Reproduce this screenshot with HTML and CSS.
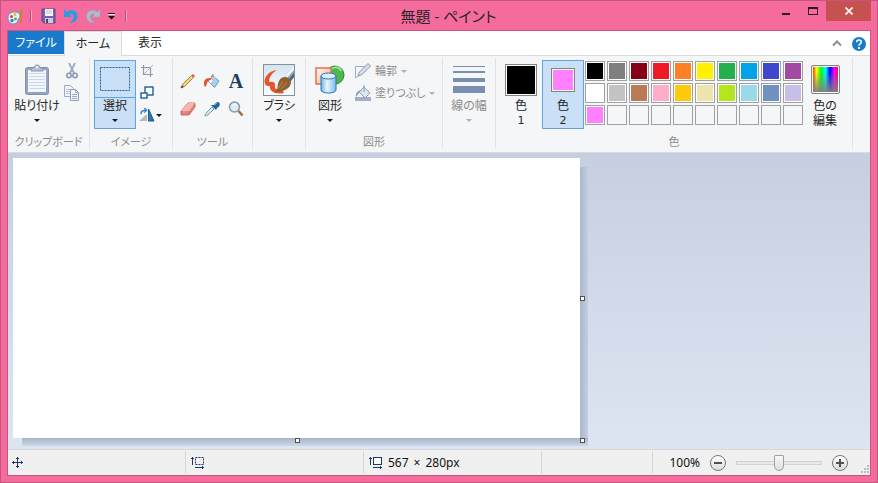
FILE: index.html
```html
<!DOCTYPE html>
<html lang="ja">
<head>
    <meta charset="UTF-8">
    <meta name="viewport" content="width=device-width, initial-scale=1.0">
    <title>無題 - ペイント</title>
    <link rel="stylesheet" href="styles.css">
</head>
<body>
    <div class="window">
        <!-- Title bar -->
        <header class="titlebar">
            <div class="quick-access">
                <svg class="app-icon" width="17" height="17" viewBox="0 0 17 17">
                    <path d="M1 10C1 6 4 4 8 4c3 0 5 1 5 4s-2 2-2 4-2 4-5 4-5-3-5-6z" fill="#e6f4fa" stroke="#4b9fc5"/>
                    <circle cx="4.500" cy="8.500" r="1.600" fill="#e8493a"/>
                    <circle cx="8" cy="6.500" r="1.500" fill="#f3b52b"/>
                    <circle cx="5" cy="12.500" r="1.700" fill="#3f78d1"/>
                    <circle cx="8.500" cy="11" r="1.400" fill="#46b04a"/>
                    <path d="M14 5v10" stroke="#e0782a" stroke-width="2"/>
                    <path d="M12 5l1-3 3-2v5z" fill="#b98a52"/>
                </svg>
                <span class="qa-line"></span>
                <button class="qa-button" aria-label="上書き保存">
                    <svg width="16" height="16" viewBox="0 0 16 16">
                        <path d="M1 1h13v14H3l-2-2z" fill="#7a62a8" stroke="#5b4687"/>
                        <path d="M4 1h8v7H4z" fill="#f4f4fa"/>
                        <path d="M5 3h6M5 5h6" stroke="#c0bfd6"/>
                        <path d="M4 10h8v5H4z" fill="#cfc9de"/>
                        <path d="M5 11h2v4H5z" fill="#4d4168"/>
                    </svg>
                </button>
                <button class="qa-button" aria-label="元に戻す">
                    <svg width="16" height="16" viewBox="0 0 16 16">
                        <path d="M1 1v8h8L6.500 6.500C9 5 10.500 6.500 10.500 9c0 2-1.500 4-4 6C12 15 14.500 12 14.500 8 14.500 3 9 .5 3.500 4z" fill="#2b9be4"/>
                    </svg>
                </button>
                <button class="qa-button" aria-label="やり直し">
                    <svg width="16" height="16" viewBox="0 0 16 16">
                        <path d="M15 1v8H7l2.500-2.500C7 5 5.500 6.500 5.500 9c0 2 1.500 4 4 6C4 15 1.500 12 1.500 8 1.500 3 7 .5 12.500 4z" fill="#aebacb" stroke="#94a2b8" stroke-width=".6"/>
                    </svg>
                </button>
                <button class="qa-button qa-more" aria-label="カスタマイズ">
                    <svg width="9" height="7" viewBox="0 0 9 7">
                        <path d="M1 0h7v1H1z" fill="#111"/>
                        <path d="M1 1h7v1H1z" fill="#fff"/>
                        <path d="M1 3h7L4.500 6.500z" fill="#111"/>
                    </svg>
                </button>
                <span class="qa-line"></span>
            </div>
            <h1 class="title">無題 - ペイント</h1>
            <div class="window-controls">
                <button class="control" aria-label="最小化"><svg width="11" height="10" viewBox="0 0 11 10"><path d="M2 7h8v2H2z" fill="#2a1a20"/></svg></button>
                <button class="control" aria-label="最大化"><svg width="10" height="8" viewBox="0 0 10 8"><path d="M0 0h10v8H0zM1 2v5h8V2z" fill="#2a1a20" fill-rule="evenodd"/></svg></button>
                <button class="control close" aria-label="閉じる"><svg width="8" height="8" viewBox="0 0 8 8"><path d="M.5.5l7 7M7.500.5l-7 7" stroke="#fff" stroke-width="1.700"/></svg></button>
            </div>
        </header>

        <main class="content">
            <nav class="tabs">
                <button class="tab file">ファイル</button>
                <button class="tab active">ホーム</button>
                <button class="tab">表示</button>
                <div class="tab-tools">
                    <button aria-label="リボンの最小化"><svg width="10" height="8" viewBox="0 0 10 8"><path d="M1 5.500l4-4 4 4" fill="none" stroke="#8c8c8c" stroke-width="2"/></svg></button>
                    <button aria-label="ヘルプ">
                        <svg width="14" height="14" viewBox="0 0 14 14">
                            <circle cx="7" cy="7" r="7" fill="#1979ca"/>
                            <path d="M4.700 5.200C4.700 2.200 9.300 2.400 9.300 5 9.300 6.800 7 6.700 7 8.800" fill="none" stroke="#fff" stroke-width="1.600"/>
                            <path d="M6 10h2v2H6z" fill="#fff"/>
                        </svg>
                    </button>
                </div>
            </nav>

            <!-- Ribbon -->
            <div class="ribbon">
                <section class="group clipboard">
                    <div class="tools">
                        <button class="big">
                            <span class="picture">
                                <svg width="26" height="32" viewBox="0 0 26 32">
                                    <rect x="1.500" y="3.500" width="23" height="27" rx="2" fill="#94a4c0" stroke="#8292b0"/>
                                    <path d="M4 6h18v22H4z" fill="#f3f7fc"/>
                                    <path d="M5 9.500h16M5 12.500h16M5 15.500h16M5 18.500h16M5 21.500h16M5 24.500h16" stroke="#cbd8e8"/>
                                    <path d="M7 7V4h3c0-4 6-4 6 0h3v3z" fill="#b6c2d5" stroke="#8493ae"/>
                                    <circle cx="13" cy="3" r="1" fill="#fff"/>
                                </svg>
                            </span>
                            <span>貼り付け</span>
                            <i class="arrow"></i>
                        </button>
                        <div class="stack">
                            <button class="small" aria-label="切り取り">
                                <svg width="16" height="16" viewBox="0 0 16 16">
                                    <path d="M5 0l5 10M11 0L6 10" stroke="#9aa8c0" stroke-width="1.800"/>
                                    <circle cx="5" cy="12.500" r="2.200" fill="none" stroke="#8a9ab6" stroke-width="1.600"/>
                                    <circle cx="11" cy="12.500" r="2.200" fill="none" stroke="#8a9ab6" stroke-width="1.600"/>
                                </svg>
                            </button>
                            <button class="small" aria-label="コピー">
                                <svg width="16" height="16" viewBox="0 0 16 16">
                                    <path d="M.5.500h6l3 3v8h-9z" fill="#f1f5fa" stroke="#9eabc2"/>
                                    <path d="M2 4.500h5M2 6.500h5M2 8.500h5" stroke="#b8c3d5"/>
                                    <path d="M6.500 4.500h5l3 3v8h-8z" fill="#f1f5fa" stroke="#8f9eb9"/>
                                    <path d="M11.500 4.500v3h3M8 9.500h5M8 11.500h5M8 13.500h5" fill="none" stroke="#9eabc2"/>
                                </svg>
                            </button>
                        </div>
                    </div>
                    <h2 class="group-name">クリップボード</h2>
                </section>

                <section class="group image">
                    <div class="tools">
                        <button class="big selected split">
                            <span class="picture">
                                <svg width="30" height="24" viewBox="0 0 30 24"><rect x=".5" y=".5" width="29" height="23" fill="none" stroke="#1f639f" stroke-dasharray="2 1"/></svg>
                            </span>
                            <span>選択</span>
                            <i class="arrow"></i>
                        </button>
                        <div class="stack">
                            <button class="small" aria-label="トリミング">
                                <svg width="14" height="14" viewBox="0 0 14 14">
                                    <path d="M3.500 1v9.500H13M1 3.500h9.500V13" fill="none" stroke="#8d9ab0" stroke-width="1.200"/>
                                    <path d="M4 10L13 1" stroke="#a9b4c6"/>
                                </svg>
                            </button>
                            <button class="small" aria-label="サイズ変更">
                                <svg width="14" height="14" viewBox="0 0 14 14">
                                    <rect x="5" y="1" width="8" height="8" fill="#fff" stroke="#1c6096" stroke-width="1.400"/>
                                    <rect x="1" y="7" width="6" height="5" fill="#fff" stroke="#1c6096" stroke-width="1.400"/>
                                </svg>
                            </button>
                            <button class="small wide" aria-label="回転">
                                <svg width="16" height="14" viewBox="0 0 16 14">
                                    <path d="M0 13h8V6z" fill="#b5b9be"/>
                                    <path d="M9.500 1v12H15z" fill="#2f76a8" stroke="#1f5f8f"/>
                                    <path d="M2 6c0-3 2-4 5-3.500M5.500 0l2 2.500L5 4.500" fill="none" stroke="#2b82d6" stroke-width="1.500"/>
                                </svg>
                                <i class="arrow"></i>
                            </button>
                        </div>
                    </div>
                    <h2 class="group-name">イメージ</h2>
                </section>

                <section class="group drawing">
                    <div class="tool-grid">
                        <button class="small" aria-label="鉛筆">
                            <svg width="16" height="16" viewBox="0 0 16 16">
                                <path d="M1 15l1.500-3.500L11.500 2.500 13.500 4.500 4.500 13.500z" fill="#f2cb62" stroke="#8e6b28" stroke-width=".8"/>
                                <path d="M11.500 2.500L13 1l2 2-1.500 1.500z" fill="#d9604f"/>
                                <path d="M1 15l1-2.500 1.500 1.500z" fill="#33302a"/>
                                <path d="M4 12l8-8" stroke="#fff0b0" stroke-width=".7"/>
                            </svg>
                        </button>
                        <button class="small" aria-label="塗りつぶし">
                            <svg width="18" height="16" viewBox="0 0 18 16">
                                <path d="M5 8l5-5 6 5-4.500 6.500z" fill="#a9d0ee" stroke="#5b87ab" stroke-width=".8"/>
                                <path d="M5.500 8l4.500-4.500L12 5l-4.500 5.500z" fill="#f2f9fd"/>
                                <path d="M10 7.500V1l-2 3" fill="none" stroke="#7c8994" stroke-width=".9"/>
                                <path d="M1.500 13.500C0 8 2 4.500 8 5c1 0 .5 2-.5 2-3 0-3.500 3-4.500 6.500z" fill="#e5532d"/>
                            </svg>
                        </button>
                        <button class="small" aria-label="テキスト"><span class="letter">A</span></button>
                        <button class="small" aria-label="消しゴム">
                            <svg width="16" height="16" viewBox="0 0 16 16">
                                <path d="M1 10l7-8h7v4l-6 8H1z" fill="#e8837c" stroke="#b25852" stroke-width=".8"/>
                                <path d="M1 10l7-8h7l-6 8z" fill="#f6b6ae"/>
                                <path d="M9 10v4" stroke="#c9675f"/>
                            </svg>
                        </button>
                        <button class="small" aria-label="色の選択">
                            <svg width="16" height="16" viewBox="0 0 16 16">
                                <path d="M1 15c0-2 1-3 7-9l2 2c-6 6-7 7-9 7z" fill="#d3e8f4" stroke="#5c7d95" stroke-width=".8"/>
                                <path d="M7 4l5 5 1-2c4-2 3-6 1-6s-2 1-4 3z" fill="#20639d"/>
                                <path d="M11 4l2-2" stroke="#6ba9d8"/>
                            </svg>
                        </button>
                        <button class="small" aria-label="拡大鏡">
                            <svg width="16" height="16" viewBox="0 0 16 16">
                                <circle cx="6.500" cy="6" r="5" fill="#dcedf8" stroke="#8c98a3" stroke-width="1.500"/>
                                <path d="M10.500 10l4 4.500" stroke="#a96a35" stroke-width="2.500"/>
                                <path d="M4 5c1-2 3-2 4-1" fill="none" stroke="#fff"/>
                            </svg>
                        </button>
                    </div>
                    <h2 class="group-name">ツール</h2>
                </section>

                <section class="group brush">
                    <div class="tools">
                        <button class="big">
                            <span class="picture">
                                <svg width="32" height="32" viewBox="0 0 32 32">
                                    <defs><linearGradient id="brushBack" x2="0" y2="1"><stop stop-color="#d3e4f1"/><stop offset="1" stop-color="#fbfdfe"/></linearGradient></defs>
                                    <rect x=".5" y=".5" width="31" height="31" fill="url(#brushBack)" stroke="#888f96"/>
                                    <path d="M14 6C5 7 0 14 2 20c1 2 3 2 5 2-1 5 5 9 14 7l-2-4c-5 1-7 0-7-2 1-5-2-6-6-5 0-5 3-9 8-12z" fill="#e7562a"/>
                                    <path d="M31 1L22 12l5 6 4-5z" fill="#8fa3b8"/>
                                    <path d="M31 1L22 12l2 2 7-8z" fill="#eef4f8"/>
                                    <path d="M31 9l-5 6 1 3 4-5z" fill="#4e6685"/>
                                    <path d="M22 13c3 0 6 3 6 6-1 6-8 9-17 9 4-2 3-4 4-8s3-7 7-7z" fill="#92602f"/>
                                    <path d="M15 25l5-8M18 25l6-7" stroke="#be8a4c"/>
                                </svg>
                            </span>
                            <span>ブラシ</span>
                            <i class="arrow"></i>
                        </button>
                    </div>
                </section>

                <section class="group shapes">
                    <div class="tools">
                        <button class="big">
                            <span class="picture">
                                <svg width="30" height="30" viewBox="0 0 30 30">
                                    <defs>
                                        <linearGradient id="tube"><stop stop-color="#6bb2e6"/><stop offset=".4" stop-color="#e7f5fd"/><stop offset="1" stop-color="#7dbce9"/></linearGradient>
                                        <linearGradient id="square" x2="1" y2="1"><stop stop-color="#fff"/><stop offset="1" stop-color="#f7a483"/></linearGradient>
                                    </defs>
                                    <circle cx="20" cy="10" r="9" fill="#4fb64d" stroke="#258b31"/>
                                    <path d="M14 7c3-6 10-6 12-1" fill="none" stroke="#a0dc92" stroke-width="2"/>
                                    <rect x="1" y="3" width="15" height="16" fill="url(#square)" stroke="#e96f40" stroke-width="1.500"/>
                                    <path d="M6 11v14c0 4 15 4 15 0V11z" fill="url(#tube)" stroke="#2975b2"/>
                                    <ellipse cx="13.500" cy="11" rx="7.500" ry="3" fill="#d8effc" stroke="#2975b2"/>
                                </svg>
                            </span>
                            <span>図形</span>
                            <i class="arrow"></i>
                        </button>
                        <div class="stack">
                            <button class="small row" disabled>
                                <svg width="16" height="16" viewBox="0 0 16 16">
                                    <path d="M10 3.500H.5V15L11.500 7" fill="none" stroke="#a0adc4"/>
                                    <path d="M3 13l1.500-4L13 .5 15.500 3 7 11.500z" fill="#d6dfeb" stroke="#8798b5"/>
                                </svg>
                                <span>輪郭</span>
                                <i class="arrow"></i>
                            </button>
                            <button class="small row" disabled>
                                <svg width="16" height="16" viewBox="0 0 16 16">
                                    <path d="M0 12h16v4H0z" fill="#a2afc7"/>
                                    <path d="M4 7l5-5 6 6-5 5z" fill="#dee6f0" stroke="#8b9ab6"/>
                                    <path d="M9 7V0" stroke="#8b9ab6"/>
                                    <path d="M1 12c-1-4 2-7 6-7L4 8z" fill="#8fa0bc"/>
                                </svg>
                                <span>塗りつぶし</span>
                                <i class="arrow"></i>
                            </button>
                        </div>
                    </div>
                    <h2 class="group-name">図形</h2>
                </section>

                <section class="group stroke">
                    <div class="tools">
                        <button class="big" disabled>
                            <span class="picture">
                                <svg width="32" height="30" viewBox="0 0 32 30"><path d="M0 1h32v1H0zM0 6h32v2H0zM0 13h32v4H0zM0 21h32v7H0z" fill="#7a8eaf"/></svg>
                            </span>
                            <span>線の幅</span>
                            <i class="arrow"></i>
                        </button>
                    </div>
                </section>

                <section class="group colors">
                    <div class="tools">
                        <button class="big color"><span class="picture"><b class="chip primary black"></b></span><span>色</span><span class="digit">1</span></button>
                        <button class="big color selected"><span class="picture"><b class="chip secondary pink"></b></span><span>色</span><span class="digit">2</span></button>
                        <div class="palette">
                            <button class="swatch black" aria-label="黒"></button>
                            <button class="swatch gray" aria-label="灰色 50%"></button>
                            <button class="swatch darkred" aria-label="濃い赤"></button>
                            <button class="swatch red" aria-label="赤"></button>
                            <button class="swatch orange" aria-label="オレンジ"></button>
                            <button class="swatch yellow" aria-label="黄"></button>
                            <button class="swatch green" aria-label="緑"></button>
                            <button class="swatch turquoise" aria-label="水色"></button>
                            <button class="swatch indigo" aria-label="藍"></button>
                            <button class="swatch purple" aria-label="紫"></button>
                            <button class="swatch white" aria-label="白"></button>
                            <button class="swatch silver" aria-label="灰色 25%"></button>
                            <button class="swatch brown" aria-label="茶"></button>
                            <button class="swatch rose" aria-label="ローズ"></button>
                            <button class="swatch gold" aria-label="金"></button>
                            <button class="swatch cream" aria-label="薄い黄"></button>
                            <button class="swatch lime" aria-label="ライム"></button>
                            <button class="swatch sky" aria-label="薄い水色"></button>
                            <button class="swatch steel" aria-label="青灰色"></button>
                            <button class="swatch lavender" aria-label="ラベンダー"></button>
                            <button class="swatch pink" aria-label="ピンク"></button>
                            <button class="swatch" disabled></button>
                            <button class="swatch" disabled></button>
                            <button class="swatch" disabled></button>
                            <button class="swatch" disabled></button>
                            <button class="swatch" disabled></button>
                            <button class="swatch" disabled></button>
                            <button class="swatch" disabled></button>
                            <button class="swatch" disabled></button>
                            <button class="swatch" disabled></button>
                        </div>
                        <button class="big color"><span class="picture"><b class="chip rainbow"></b></span><span>色の</span><span>編集</span></button>
                    </div>
                    <h2 class="group-name">色</h2>
                </section>
            </div>

            <!-- Drawing area -->
            <div class="workspace">
                <div class="paper">
                    <span class="handle right"></span>
                    <span class="handle bottom"></span>
                    <span class="handle corner"></span>
                </div>
            </div>

            <footer class="statusbar">
                <div class="cell">
                    <svg width="11" height="11" viewBox="0 0 11 11"><path d="M5 0h1v11H5zM0 5h11v1H0zM4 1h3v1H4zM4 9h3v1H4zM1 4h1v3H1zM9 4h1v3H9z" fill="#1f3864"/></svg>
                </div>
                <div class="cell">
                    <svg width="14" height="12" viewBox="0 0 14 12">
                        <path d="M1 0h1v8H1zM0 1h3v1H0zM4 10h9v1H4zM11 9h1v3h-1z" fill="#1f3864"/>
                        <rect x="4.500" y=".5" width="8" height="7" fill="none" stroke="#1f3864" stroke-dasharray="2 1"/>
                    </svg>
                </div>
                <div class="cell">
                    <svg width="14" height="12" viewBox="0 0 14 12">
                        <path d="M1 0h1v8H1zM0 1h3v1H0zM4 10h9v1H4zM11 9h1v3h-1z" fill="#1f3864"/>
                        <rect x="4.500" y=".5" width="8" height="7" fill="#fff" stroke="#1f3864"/>
                    </svg>
                    <span>567</span>
                    <span>×</span>
                    <span>280px</span>
                </div>
                <div class="cell grow"></div>
                <div class="zoom">
                    <label for="zoomRange">100%</label>
                    <button class="round" aria-label="縮小"><svg width="8" height="8" viewBox="0 0 8 8"><path d="M0 3h8v2H0z" fill="#505050"/></svg></button>
                    <input type="range" id="zoomRange" min="0" max="100" value="50">
                    <button class="round" aria-label="拡大"><svg width="8" height="8" viewBox="0 0 8 8"><path d="M0 3h8v2H0zM3 0h2v8H3z" fill="#505050"/></svg></button>
                </div>
                <svg class="grip" width="9" height="9" viewBox="0 0 9 9"><path d="M6 0h2v2H6zM3 3h2v2H3zM6 3h2v2H6zM0 6h2v2H0zM3 6h2v2H3zM6 6h2v2H6z" fill="#bcbcbc"/></svg>
            </footer>
        </main>
    </div>
</body>
</html>
```
FILE: styles.css
```css
* {
    box-sizing: border-box;
}
body {
    margin: 0;
    font-family: "Noto Sans", "Noto Sans CJK JP", sans-serif;
    font-size: 12px;
    line-height: 16px;
    font-feature-settings: "palt";
    color: #262626;
}
button {
    margin: 0;
    padding: 0;
    border: 0;
    background: none;
    font: inherit;
    font-feature-settings: inherit;
    color: inherit;
}
svg {
    display: block;
    flex-shrink: 0;
}
.window {
    display: flex;
    flex-direction: column;
    height: 100vh;
    padding: 0 6px 6px;
    border: 1px solid #c3567d;
    background: #f66b9d;
}

/* Title bar */
.titlebar {
    display: flex;
    height: 29px;
}
.quick-access {
    display: flex;
    align-items: center;
    height: 30px;
}
.app-icon {
    margin-right: 6px;
}
.qa-line {
    width: 2px;
    height: 12px;
    margin-right: 6px;
    border-left: 1px solid #c05077;
    border-right: 1px solid #f9a6c4;
}
.qa-button {
    display: flex;
    justify-content: center;
    width: 22px;
}
.qa-more {
    width: 15px;
    margin-right: 6px;
}
.title {
    flex: 1;
    margin: 0;
    font-size: 15px;
    font-weight: normal;
    line-height: 30px;
    text-align: center;
}
.window-controls {
    display: flex;
    align-items: flex-start;
    padding-left: 8px;
}
.control {
    display: flex;
    justify-content: center;
    align-items: center;
    width: 27px;
    height: 20px;
}
.close {
    width: 45px;
    background: #c75050;
}

.content {
    flex: 1;
    display: flex;
    flex-direction: column;
    min-height: 0;
    border: 1px solid #cc557f;
}

/* Tabs */
.tabs {
    display: flex;
    height: 25px;
    background: #fff;
    box-shadow: inset 0 -1px #dadbdc;
}
.tab {
    width: 56px;
    height: 24px;
}
.tab.file {
    height: 23px;
    background: #1979ca;
    color: #fff;
}
.tab.active {
    width: 58px;
    height: 25px;
    border: 1px solid #dadbdc;
    border-bottom: 0;
    background: #f5f6f7;
}
.tab-tools {
    display: flex;
    align-items: center;
    gap: 10px;
    margin-left: auto;
    padding-right: 4px;
}

/* Ribbon */
.ribbon {
    display: flex;
    padding: 2px 0 3px;
    border-bottom: 1px solid #dadbdc;
    background: #f5f6f7;
}
.group {
    display: flex;
    flex-direction: column;
    justify-content: space-between;
    height: 91px;
    padding-top: 2px;
    border-right: 1px solid #e2e3e4;
}
.group-name {
    margin: 0;
    font-size: 11px;
    font-weight: normal;
    line-height: 14px;
    text-align: center;
    color: #8c8c8c;
}
.tools {
    display: flex;
    align-items: flex-start;
}
.clipboard { width: 82px; }
.clipboard .tools { padding-left: 7px; gap: 4px; }
.image { width: 83px; }
.image .tools { padding-left: 4px; gap: 2px; }
.drawing { width: 80px; }
.brush, .stroke { width: 53px; }
.brush .tools, .stroke .tools { justify-content: center; }
.shapes { width: 137px; }
.shapes .tools { padding-left: 2px; gap: 3px; }
.colors { width: 357px; }
.colors .tools { padding-left: 4px; }

.big {
    display: flex;
    flex-direction: column;
    align-items: center;
    width: 44px;
    height: 69px;
    border: 1px solid transparent;
    white-space: nowrap;
}
.picture {
    display: flex;
    justify-content: center;
    align-items: center;
    width: 100%;
    height: 37px;
}
.big .arrow {
    margin-top: 5px;
}
.split, .color {
    width: 42px;
}
.selected {
    border-color: #62a2e4;
    background: #c9e0f7;
}
.split .picture {
    border-bottom: 1px solid #62a2e4;
}
.color {
    line-height: 15px;
}
.arrow {
    width: 6px;
    height: 3px;
    border: 3px solid transparent;
    border-top-color: #1a1a1a;
    border-bottom: 0;
}
button:disabled {
    color: #8c8c8c;
}
button:disabled .arrow {
    border-top-color: #b0b0b0;
}
.stack {
    display: flex;
    flex-direction: column;
}
.small {
    display: flex;
    justify-content: center;
    align-items: center;
    width: 18px;
    height: 22px;
}
.small.wide {
    width: 24px;
    gap: 1px;
}
.small.row {
    justify-content: flex-start;
    width: auto;
    gap: 4px;
    font-size: 11px;
    white-space: nowrap;
}
.tool-grid {
    display: grid;
    grid-template-columns: repeat(3, 24px);
    grid-auto-rows: 28px;
    justify-items: center;
    align-items: center;
    padding: 7px 0 0 3px;
}
.letter {
    font-family: "Liberation Serif", serif;
    font-size: 20px;
    font-weight: bold;
    color: #1d3c5e;
}
.digit {
    font-family: "DejaVu Sans", sans-serif;
    font-size: 11px;
}

/* Colours */
.chip {
    border: 1px solid #838383;
    box-shadow: inset 0 0 0 1px #fff;
}
.primary {
    width: 32px;
    height: 32px;
}
.secondary {
    width: 24px;
    height: 24px;
}
.rainbow {
    width: 29px;
    height: 29px;
    border-radius: 2px;
    background: linear-gradient(to bottom, transparent 20%, #808080),
                linear-gradient(to right, #f00, #ff0, #0f0, #0ff, #00f, #f0f, #f00);
}
.palette {
    display: grid;
    grid-template-columns: repeat(10, 20px);
    gap: 2px;
    padding: 1px;
}
.swatch {
    height: 20px;
    border: 1px solid #a0a0a0;
    box-shadow: inset 0 0 0 1px #fff;
}
.swatch:disabled {
    box-shadow: none;
}
.black { background: #000; }
.gray { background: #7f7f7f; }
.darkred { background: #880015; }
.red { background: #ed1c24; }
.orange { background: #ff7f27; }
.yellow { background: #fff200; }
.green { background: #22b14c; }
.turquoise { background: #00a2e8; }
.indigo { background: #3f48cc; }
.purple { background: #a349a4; }
.white { background: #fff; }
.silver { background: #c3c3c3; }
.brown { background: #b97a57; }
.rose { background: #ffaec9; }
.gold { background: #ffc90e; }
.cream { background: #efe4b0; }
.lime { background: #b5e61d; }
.sky { background: #99d9ea; }
.steel { background: #7092be; }
.lavender { background: #c8bfe7; }
.pink { background: #ff80ff; }

/* Drawing area */
.workspace {
    flex: 1;
    min-height: 0;
    padding: 5px;
    overflow: hidden;
    background: linear-gradient(#c6cfe0, #dce6f2);
}
.paper {
    position: relative;
    width: 567px;
    height: 280px;
    background: #fff;
}
.paper::before, .paper::after {
    content: "";
    position: absolute;
}
.paper::before {
    top: 9px;
    bottom: 0;
    left: 100%;
    width: 8px;
    background: linear-gradient(to right, #a9b8cd, #c3cee0);
}
.paper::after {
    top: 100%;
    left: 9px;
    right: -8px;
    height: 8px;
    background: linear-gradient(#a8b4ca, #cdd9e8);
}
.handle {
    position: absolute;
    z-index: 1;
    width: 5px;
    height: 5px;
    border: 1px solid #505050;
    background: #fff;
}
.handle.right { left: 100%; top: 138px; }
.handle.bottom { left: 282px; top: 100%; }
.handle.corner { left: 100%; top: 100%; }

/* Status bar */
.statusbar {
    display: flex;
    height: 26px;
    padding-top: 1px;
    border-top: 1px solid #d7d7d7;
    background: #f0f0f0;
    color: #111;
}
.cell {
    display: flex;
    align-items: center;
    gap: 5px;
    width: 178px;
    margin-bottom: 1px;
    padding-left: 4px;
    border-right: 1px solid #d7d7d7;
}
.cell + .cell {
    padding-left: 5px;
}
.cell.grow {
    flex: 1;
}
.zoom {
    display: flex;
    align-items: center;
    gap: 10px;
    padding: 0 13px 0 16px;
}
.round {
    display: flex;
    justify-content: center;
    align-items: center;
    width: 16px;
    height: 16px;
    border: 1px solid #777;
    border-radius: 50%;
    background: linear-gradient(#fff, #dcdcdc);
}
input[type="range"] {
    appearance: none;
    width: 86px;
    height: 16px;
    margin: 0;
    background: none;
}
input[type="range"]::-webkit-slider-runnable-track {
    height: 4px;
    border: 1px solid #d2d2d2;
    background: #e9e9e9;
}
input[type="range"]::-webkit-slider-thumb {
    appearance: none;
    width: 10px;
    height: 16px;
    margin-top: -7px;
    border: 1px solid #a0a0a0;
    border-radius: 1px 1px 5px 5px;
    background: linear-gradient(#f8f8f8, #dedede);
}
.grip {
    align-self: flex-end;
    margin-bottom: 1px;
}
```
